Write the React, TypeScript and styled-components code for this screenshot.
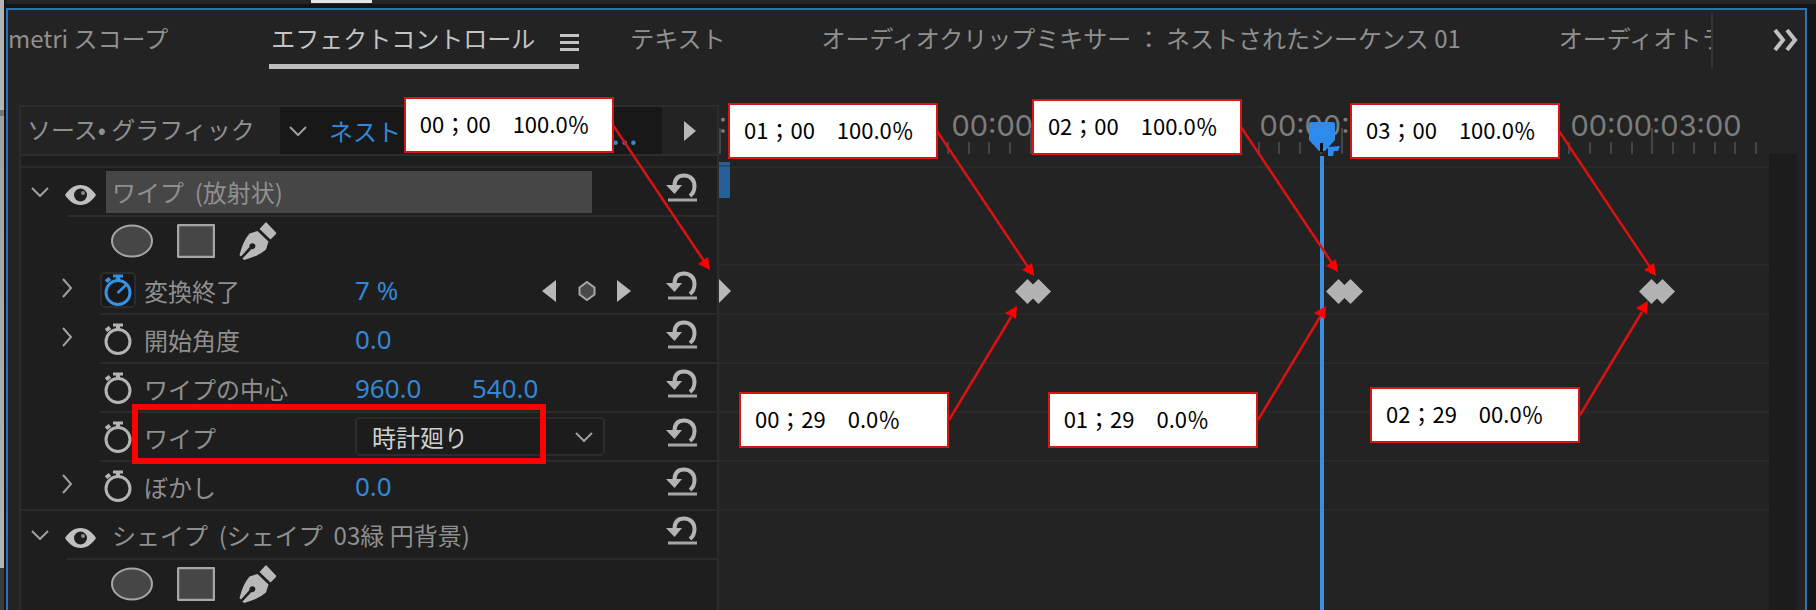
import React from "react";
import styled, { createGlobalStyle, css } from "styled-components";

const GlobalStyle = createGlobalStyle`
  * { box-sizing: border-box; }
  html, body { margin: 0; background: #141414; overflow: hidden; }
  body { font-family: "Noto Sans CJK JP", "Noto Sans", sans-serif; font-size: 24px; line-height: 36px; color: #8f8f8f; }
  button, input, select { font: inherit; color: inherit; background: none; border: 0; padding: 0; margin: 0; }
  button { display: flex; align-items: center; justify-content: center; flex: none; }
  svg { display: block; flex: none; }
`;

const Screen = styled.div`
  min-height: 100vh;
  display: flex;
`;
const Neighbour = styled.div`
  flex: 0 0 4px;
  margin-right: 2px;
  background: linear-gradient(#b4b4b4 110px, #767676 110px, #767676 116px, #a2a2a2 116px, #b4b4b4 568px, #3c3c3c 568px);
`;
const Column = styled.div`
  flex: 1;
  min-width: 0;
  display: flex;
  flex-direction: column;
`;
const TopEdge = styled.div`
  height: 8px;
  background: linear-gradient(#262426 4px, #141414 4px);
`;
const TopMarker = styled.div`
  width: 61px;
  height: 3px;
  margin-left: 305px;
  background: #e6e6e6;
`;
const Panel = styled.section`
  flex: 1;
  margin-right: 9px;
  border: 2px solid #2b73b5;
  border-bottom: 0;
  background: #232323;
  display: flex;
  flex-direction: column;
`;

const TabBar = styled.nav`
  height: 95px;
  display: flex;
  align-items: flex-start;
  padding-top: 2px;
`;
const TabList = styled.div`
  flex: 1;
  min-width: 0;
  height: 57px;
  display: flex;
  overflow: hidden;
  white-space: nowrap;
  border-right: 2px solid #323232;
`;
const Tab = styled.button<{ $gap: number }>`
  height: 57px;
  align-items: flex-start;
  padding-top: 8px;
  margin-left: ${(p) => p.$gap}px;
`;
const ActiveTab = styled.div`
  flex: none;
  display: flex;
  width: 310px;
  height: 57px;
  margin-left: 101px;
  padding: 8px 0 0 2px;
  justify-content: space-between;
  align-items: flex-start;
  border-bottom: 5px solid #bdbdbd;
  color: #c4c4c4;
  button + button { margin-top: 14px; }
`;
const MoreTabs = styled.button`
  width: 92px;
  padding: 17px 7px 0 0;
  justify-content: flex-end;
`;

const Body = styled.div`
  flex: 1;
  display: flex;
  padding: 0 8px 0 11px;
`;
const Properties = styled.div`
  position: relative;
  z-index: 1;
  flex: 0 0 700px;
  border: solid #2c2c2c;
  border-width: 0 2px;
  background: #1e1e1e;
`;
const SourceBar = styled.header`
  height: 51px;
  display: flex;
  border: solid #2d2d2d;
  border-width: 2px 0;
  background: #232323;
`;
const SourceName = styled.div`
  flex: 0 0 259px;
  padding: 4px 0 0 6px;
  white-space: nowrap;
`;
const SequenceCell = styled.div`
  flex: 1;
  display: flex;
  align-items: center;
  gap: 22px;
  padding: 0 24px 0 9px;
  background: #181818;
  color: #3387d6;
`;
const SequenceName = styled.span`
  flex: 1;
  min-width: 0;
  overflow: hidden;
  white-space: nowrap;
`;
const Ellipsis = styled.span`
  margin-left: -22px;
  font-size: 32px;
`;
const PlayCell = styled.button`
  width: 55px;
`;
const Band = styled.div`
  height: 10px;
`;
const Rule = styled.div<{ $inset?: number }>`
  height: 2px;
  margin-left: ${(p) => p.$inset ?? 0}px;
  background: #2b2b2b;
`;
const GroupRow = styled.div`
  height: 47px;
  display: flex;
  align-items: center;
  padding: 0 20px 0 10px;
`;
const Eye = styled.button`
  margin: 6px 10px 0 16px;
`;
const GroupName = styled.span<{ $selected?: boolean }>`
  flex: 0 0 486px;
  height: 42px;
  padding: 3px 0 0 6px;
  white-space: pre;
  ${(p) => p.$selected && css`background: #464646;`}
`;
const MaskRow = styled.div`
  height: 49px;
  display: flex;
  align-items: center;
  gap: 24px;
  padding: 0 0 1px 90px;
`;
const PropertyRow = styled.div`
  height: 47px;
  display: flex;
  align-items: center;
  padding: 0 20px 0 40px;
`;
const Toggle = styled.div`
  flex: 0 0 39px;
  height: 24px;
`;
const Stopwatch = styled.button<{ $on?: boolean }>`
  width: 36px;
  height: 36px;
  border: 2px solid ${(p) => (p.$on ? "#2c2c2c" : "transparent")};
  border-radius: 5px;
  background: ${(p) => (p.$on ? "#181818" : "none")};
  color: ${(p) => (p.$on ? "#3593e6" : "#b4b4b4")};
`;
const PropertyName = styled.label`
  flex: 0 0 219px;
  padding: 2px 0 0 8px;
`;
const Value = styled.input`
  width: 117px;
  height: 36px;
  font-family: "Noto Sans", sans-serif;
  font-size: 26px;
  color: #3387d6;
`;
const KeyNav = styled.div`
  display: flex;
  justify-content: space-between;
  width: 89px;
  margin: 2px 0 0 auto;
`;
const Reset = styled.button`
  margin: 0 0 8px auto;
  ${KeyNav} + & { margin-left: 35px; }
`;
const Picker = styled.div`
  display: grid;
  align-items: center;
  justify-items: end;
  > * { grid-area: 1 / 1; }
  > svg { margin-right: 12px; pointer-events: none; }
`;
const Select = styled.select`
  width: 250px;
  height: 39px;
  padding: 0 0 2px 15px;
  appearance: none;
  border: 2px solid #2c2c2c;
  border-radius: 5px;
  background: #1c1c1c;
  color: #cfcfcf;
`;
const Highlight = styled.div`
  position: absolute;
  left: 111px;
  top: 299px;
  width: 414px;
  height: 60px;
  border: 6px solid #ff0000;
`;

const Timeline = styled.div`
  position: relative;
  flex: 1;
  min-width: 0;
`;
const Ruler = styled.div`
  height: 51px;
  overflow: hidden;
  color: #7d7d7d;
`;
const TimeLabels = styled.div`
  height: 23px;
  display: flex;
  justify-content: space-between;
  margin: 0 113px 0 4px;
`;
const TimeLabel = styled.span`
  flex: none;
  width: 0;
  display: flex;
  justify-content: center;
  white-space: nowrap;
  font-family: Inter, sans-serif;
  font-size: 29px;
  line-height: 42px;
`;
const Ticks = styled.div`
  display: flex;
  align-items: flex-end;
  height: 26px;
  margin-right: 12px;
`;
const Tick = styled.span<{ $major: boolean }>`
  flex: 1;
  height: ${(p) => (p.$major ? 26 : 12)}px;
  border-left: 2px solid #454545;
  &:last-child { border-right: 2px solid #454545; }
`;
const Lane = styled.div<{ $line?: boolean }>`
  height: 49px;
  border-top: 2px solid ${(p) => (p.$line ? "#292929" : "transparent")};
`;
const Scroll = styled.div`
  flex: 0 0 28px;
  margin-top: 49px;
  background: #1c1c1c;
`;
const Clip = styled.div`
  position: absolute;
  left: 0;
  top: 57px;
  width: 11px;
  height: 36px;
  background: linear-gradient(#26609b 3px, #2b4a6b 3px, #2b4a6b 5px, #26609b 5px);
`;
const Pin = styled.div<{ $at: number; $top: number }>`
  position: absolute;
  left: ${(p) => p.$at}%;
  top: ${(p) => p.$top}px;
`;
const PlayLine = styled.div<{ $at: number }>`
  position: absolute;
  left: ${(p) => p.$at}%;
  top: 51px;
  bottom: 0;
  width: 4px;
  background: #3b8fe0;
`;
const Note = styled.div`
  width: 210px;
  height: 56px;
  padding: 6px 0 0 14px;
  border: 2px solid #d61515;
  background: #fff;
  color: #000;
  font-size: 22px;
  white-space: pre;
`;
const ArrowSvg = styled.svg<{ $up?: boolean }>`
  position: absolute;
  left: 209px;
  top: ${(p) => (p.$up ? -86 : 28)}px;
`;

const ChevronDown = () => (
  <svg width="18" height="10" viewBox="0 0 18 10" fill="none" stroke="#a0a0a0" strokeWidth="2"><path d="M1 1l8 8 8-8" /></svg>
);
const ChevronRight = () => (
  <svg width="12" height="20" viewBox="0 0 12 20" fill="none" stroke="#a0a0a0" strokeWidth="2"><path d="M2 1l8 9-8 9" /></svg>
);
const EyeIcon = () => (
  <svg width="31" height="20" viewBox="0 0 31 20">
    <path d="M0 10C4 4 9 0 15.500 0S27 4 31 10C27 16 22 20 15.500 20S4 16 0 10z" fill="#c0c0c0" />
    <circle cx="15.500" cy="10" r="6.500" fill="#1e1e1e" /><circle cx="18" cy="8" r="2" fill="#8a8a8a" />
  </svg>
);
const ResetIcon = () => (
  <svg width="31" height="29" viewBox="0 0 31 29">
    <path d="M8.500 13C8.500 6 12 2.500 18 2.500C24.500 2.500 28.500 7 28.500 13C28.500 18 26.500 21 24 23" fill="none" stroke="#b4b4b4" strokeWidth="4" />
    <path d="M0 12H16L8.500 21z" fill="#b4b4b4" /><path d="M2 25.500h29v3H2z" fill="#a6a6a6" />
  </svg>
);
const StopwatchIcon = ({ on }: { on?: boolean }) => (
  <svg width="28" height="32" viewBox="0 0 28 32" fill="none" stroke="currentColor">
    <circle cx="14" cy="18.500" r="12" strokeWidth="3" />
    <path d="M9 2h10" strokeWidth="3" /><path d="M14 2v5" strokeWidth="4" /><path d="M2 7.500l4-3" strokeWidth="4" />
    {on && <path d="M13.500 19L22 11" strokeWidth="2.500" />}
  </svg>
);
const PenIcon = () => (
  <svg width="38" height="38" viewBox="0 0 38 38">
    <path d="M27.500 0.500L37 10.500Q37.500 11.500 36.500 12.500L31.500 17.500L20.500 7L26 1Q27 0 27.500 0.500z" fill="#b8b8b8" />
    <path d="M18.500 9L29.500 19.500L27 27.500Q20 34 5 38L3.500 36.500L12.500 27A3 3 0 1 0 10.500 25L2 34.500L0.500 33Q4 19 10.500 11.500z" fill="#b8b8b8" />
  </svg>
);
const MaskTools = () => (
  <MaskRow>
    <button aria-label="楕円形マスクの作成"><svg width="42" height="34" viewBox="0 0 42 34"><ellipse cx="21" cy="17" rx="20" ry="15.500" fill="#464646" stroke="#a6a6a6" strokeWidth="2" /></svg></button>
    <button aria-label="長方形マスクの作成"><svg width="38" height="34" viewBox="0 0 38 34"><rect x="1" y="1" width="36" height="32" rx="1" fill="#464646" stroke="#a6a6a6" strokeWidth="2.500" /></svg></button>
    <button aria-label="ベジェのペンマスクの作成"><PenIcon /></button>
  </MaskRow>
);

type PropertyProps = {
  id: string;
  name: string;
  values?: string[];
  expandable?: boolean;
  animated?: boolean;
  children?: React.ReactNode;
};
const Property = ({ id, name, values = [], expandable, animated, children }: PropertyProps) => (
  <PropertyRow>
    <Toggle>{expandable && <button aria-label={`${name}を展開`}><ChevronRight /></button>}</Toggle>
    <Stopwatch $on={animated} aria-label={`${name}のアニメーション`}><StopwatchIcon on={animated} /></Stopwatch>
    <PropertyName htmlFor={id}>{name}</PropertyName>
    {values.map((v, i) => <Value key={i} id={i ? `${id}-${i}` : id} aria-label={name} defaultValue={v} />)}
    {children}
    <Reset aria-label={`${name}をリセット`}><ResetIcon /></Reset>
  </PropertyRow>
);

const Group = ({ name, selected }: { name: string; selected?: boolean }) => (
  <GroupRow>
    <button aria-label="折りたたむ"><ChevronDown /></button>
    <Eye aria-label="エフェクトの切り替え"><EyeIcon /></Eye>
    <GroupName $selected={selected}>{name}</GroupName>
    <Reset aria-label={`${name}をリセット`}><ResetIcon /></Reset>
  </GroupRow>
);

const DownArrow = () => (
  <ArrowSvg width="98" height="146" viewBox="0 0 98 146">
    <path d="M0 0L91 136" stroke="#dc1212" strokeWidth="2.500" /><path d="M97 145L85 139L95 132z" fill="#ff0000" />
  </ArrowSvg>
);
const UpArrow = () => (
  <ArrowSvg $up width="70" height="116" viewBox="0 0 70 116">
    <path d="M1 114L63 11" stroke="#dc1212" strokeWidth="2.500" /><path d="M69 0L68 13L57 7z" fill="#ff0000" />
  </ArrowSvg>
);

const labels = ["00:00:00:00", "00:00:01:00", "00:00:02:00", "00:00:03:00"];
const pairs = [{ at: 28.2, gap: 11 }, { at: 57.8, gap: 12 }, { at: 87.6, gap: 11 }];
const notes = [
  { text: "01；00　100.0％", at: 0.86, top: -2 },
  { text: "02；00　100.0％", at: 29.8, top: -6 },
  { text: "03；00　100.0％", at: 60.1, top: -2 },
  { text: "00；29　0.0％", at: 1.9, top: 287, up: true },
  { text: "01；29　0.0％", at: 31.3, top: 287, up: true },
  { text: "02；29　00.0％", at: 62, top: 282, up: true },
];
const lanes = [true, false, true, true, true, true, true, true, false];

export default function App() {
  return (
    <>
      <GlobalStyle />
      <Screen>
        <Neighbour />
        <Column>
          <TopEdge><TopMarker /></TopEdge>
          <Panel>
            <TabBar>
              <TabList>
                <Tab $gap={0}>metri スコープ</Tab>
                <ActiveTab>
                  <button>エフェクトコントロール</button>
                  <button aria-label="パネルメニュー">
                    <svg width="19" height="18" viewBox="0 0 19 18"><path d="M0 0h19v3H0zM0 7h19v3H0zM0 14h19v3H0z" fill="#c4c4c4" /></svg>
                  </button>
                </ActiveTab>
                <Tab $gap={51}>テキスト</Tab>
                <Tab $gap={96}>オーディオクリップミキサー ： ネストされたシーケンス 01</Tab>
                <Tab $gap={98}>オーディオトラックミキサー</Tab>
              </TabList>
              <MoreTabs aria-label="その他のタブ">
                <svg width="25" height="22" viewBox="0 0 25 22" fill="none" stroke="#c0c0c0" strokeWidth="4"><path d="M2 1l8 10-8 10M14 1l8 10-8 10" /></svg>
              </MoreTabs>
            </TabBar>
            <Body>
              <Properties>
                <SourceBar>
                  <SourceName>ソース• グラフィック</SourceName>
                  <SequenceCell>
                    <ChevronDown />
                    <SequenceName>ネストされたシーケンス</SequenceName>
                    <Ellipsis>...</Ellipsis>
                  </SequenceCell>
                  <PlayCell aria-label="タイムラインの表示">
                    <svg width="12" height="20" viewBox="0 0 12 20"><path d="M0 0l12 10L0 20z" fill="#b8b8b8" /></svg>
                  </PlayCell>
                </SourceBar>
                <Band />
                <Rule />
                <Group name="ワイプ  (放射状)" selected />
                <Rule $inset={46} />
                <MaskTools />
                <Property id="completion" name="変換終了" values={["7 %"]} expandable animated>
                  <KeyNav>
                    <button aria-label="前のキーフレーム"><svg width="14" height="22" viewBox="0 0 14 22"><path d="M14 0v22L0 11z" fill="#b8b8b8" /></svg></button>
                    <button aria-label="キーフレームの追加"><svg width="18" height="22" viewBox="0 0 18 22"><path d="M9 2l7.500 5.500v7L9 20l-7.500-5.500v-7z" fill="#4a4a4a" stroke="#a6a6a6" strokeWidth="2" /></svg></button>
                    <button aria-label="次のキーフレーム"><svg width="14" height="22" viewBox="0 0 14 22"><path d="M0 0v22l14-11z" fill="#b8b8b8" /></svg></button>
                  </KeyNav>
                </Property>
                <Rule $inset={79} />
                <Property id="angle" name="開始角度" values={["0.0"]} expandable />
                <Rule $inset={79} />
                <Property id="center" name="ワイプの中心" values={["960.0", "540.0"]} />
                <Rule $inset={79} />
                <Property id="wipe" name="ワイプ">
                  <Picker>
                    <Select id="wipe"><option>時計廻り</option></Select>
                    <ChevronDown />
                  </Picker>
                </Property>
                <Rule $inset={79} />
                <Property id="feather" name="ぼかし" values={["0.0"]} expandable />
                <Rule />
                <Group name="シェイプ  (シェイプ  03緑 円背景)" />
                <Rule $inset={46} />
                <MaskTools />
                <Highlight />
                <Pin $at={55} $top={-8}><Note>00；00　100.0％</Note><DownArrow /></Pin>
              </Properties>
              <Timeline>
                <Ruler>
                  <TimeLabels>{labels.map((t) => <TimeLabel key={t}>{t}</TimeLabel>)}</TimeLabels>
                  <Ticks>{Array.from({ length: 50 }, (_, i) => <Tick key={i} $major={i % 15 === 0} />)}</Ticks>
                </Ruler>
                <Band />
                {lanes.map((line, i) => <Lane key={i} $line={line} />)}
                <Clip />
                <Pin $at={0} $top={174}><svg width="12" height="24" viewBox="0 0 12 24"><path d="M0 0l12 12L0 24z" fill="#b8b8b8" /></svg></Pin>
                {pairs.map((p) => (
                  <Pin key={p.at} $at={p.at} $top={174}>
                    <svg width="37" height="25" viewBox="0 0 37 25" fill="#b2b2b2">
                      <path d="M0 12.500L12.500 0L25 12.500L12.500 25z" /><path d={`M${p.gap} 12.500l12.500-12.500l12.500 12.500l-12.500 12.500z`} />
                    </svg>
                  </Pin>
                ))}
                <PlayLine $at={57.2} />
                <Pin $at={56.2} $top={17}>
                  <svg width="32" height="35" viewBox="0 0 32 35">
                    <path d="M0 2Q0 0 2 0H24Q26 0 26 2V18L16 29H10L0 18z" fill="#2d8ceb" />
                    <path d="M11 21h3v9h-3z" fill="#111" />
                    <path d="M19 25L31 24L29 29L25 29L24 34H19z" fill="#2d8ceb" />
                  </svg>
                </Pin>
                {notes.map((n) => (
                  <Pin key={n.text} $at={n.at} $top={n.top}>
                    <Note>{n.text}</Note>
                    {n.up ? <UpArrow /> : <DownArrow />}
                  </Pin>
                ))}
              </Timeline>
              <Scroll />
            </Body>
          </Panel>
        </Column>
      </Screen>
    </>
  );
}
